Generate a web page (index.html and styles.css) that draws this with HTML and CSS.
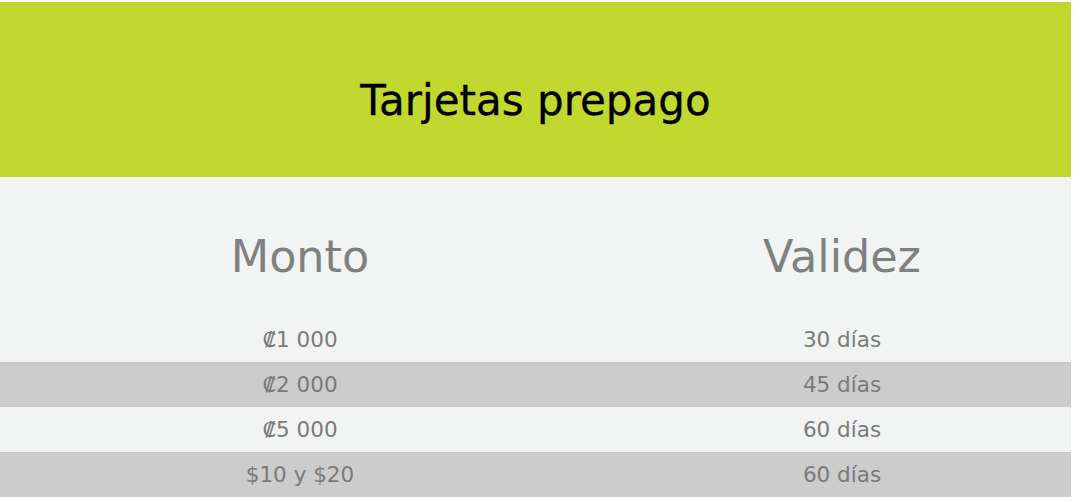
FILE: index.html
```html
<!DOCTYPE html>
<html lang="es">
<head>
<meta charset="utf-8">
<title>Tarjetas prepago</title>
<link rel="stylesheet" href="styles.css">
</head>
<body>
<div class="page">
  <header class="banner">
    <h1 class="title">Tarjetas prepago</h1>
  </header>
  <section class="prices">
    <div class="row head">
      <div class="cell">Monto</div>
      <div class="cell">Validez</div>
    </div>
    <div class="row light">
      <div class="cell">₡1 000</div>
      <div class="cell">30 días</div>
    </div>
    <div class="row dark">
      <div class="cell">₡2 000</div>
      <div class="cell">45 días</div>
    </div>
    <div class="row light">
      <div class="cell">₡5 000</div>
      <div class="cell">60 días</div>
    </div>
    <div class="row dark">
      <div class="cell">$10 y $20</div>
      <div class="cell">60 días</div>
    </div>
  </section>
</div>
</body>
</html>
```

FILE: styles.css
```css
html, body {
  margin: 0;
  padding: 0;
  background: #ffffff;
}

body {
  font-family: "DejaVu Sans", "Liberation Sans", sans-serif;
}

.page {
  width: 1071px;
  margin-top: 2px;
  background: #f2f4f3;
}

.banner {
  background: #c1d82f;
  height: 175px;
  box-sizing: border-box;
  padding-top: 75px;
  text-align: center;
}

.title {
  margin: 0;
  font-size: 42px;
  line-height: 48px;
  font-weight: normal;
  color: #000000;
  -webkit-text-stroke: 0.3px #000000;
}

.row {
  display: grid;
  grid-template-columns: 600px 1fr;
  text-align: center;
}

.row .cell + .cell {
  padding-left: 13px;
}

.head {
  padding: 54px 0 34px;
  font-size: 44.5px;
  line-height: 52px;
  color: #808080;
}

.light,
.dark {
  height: 45px;
  box-sizing: border-box;
  font-size: 21.5px;
  line-height: 44px;
  color: #7b7b7b;
}

.light {
  background: #f2f4f3;
  border-top: 1px solid #f2f4f3;
}

.dark {
  background: #cccccc;
  border-top: 1px solid #c4c5c4;
  color: #7a7a7a;
}
```
